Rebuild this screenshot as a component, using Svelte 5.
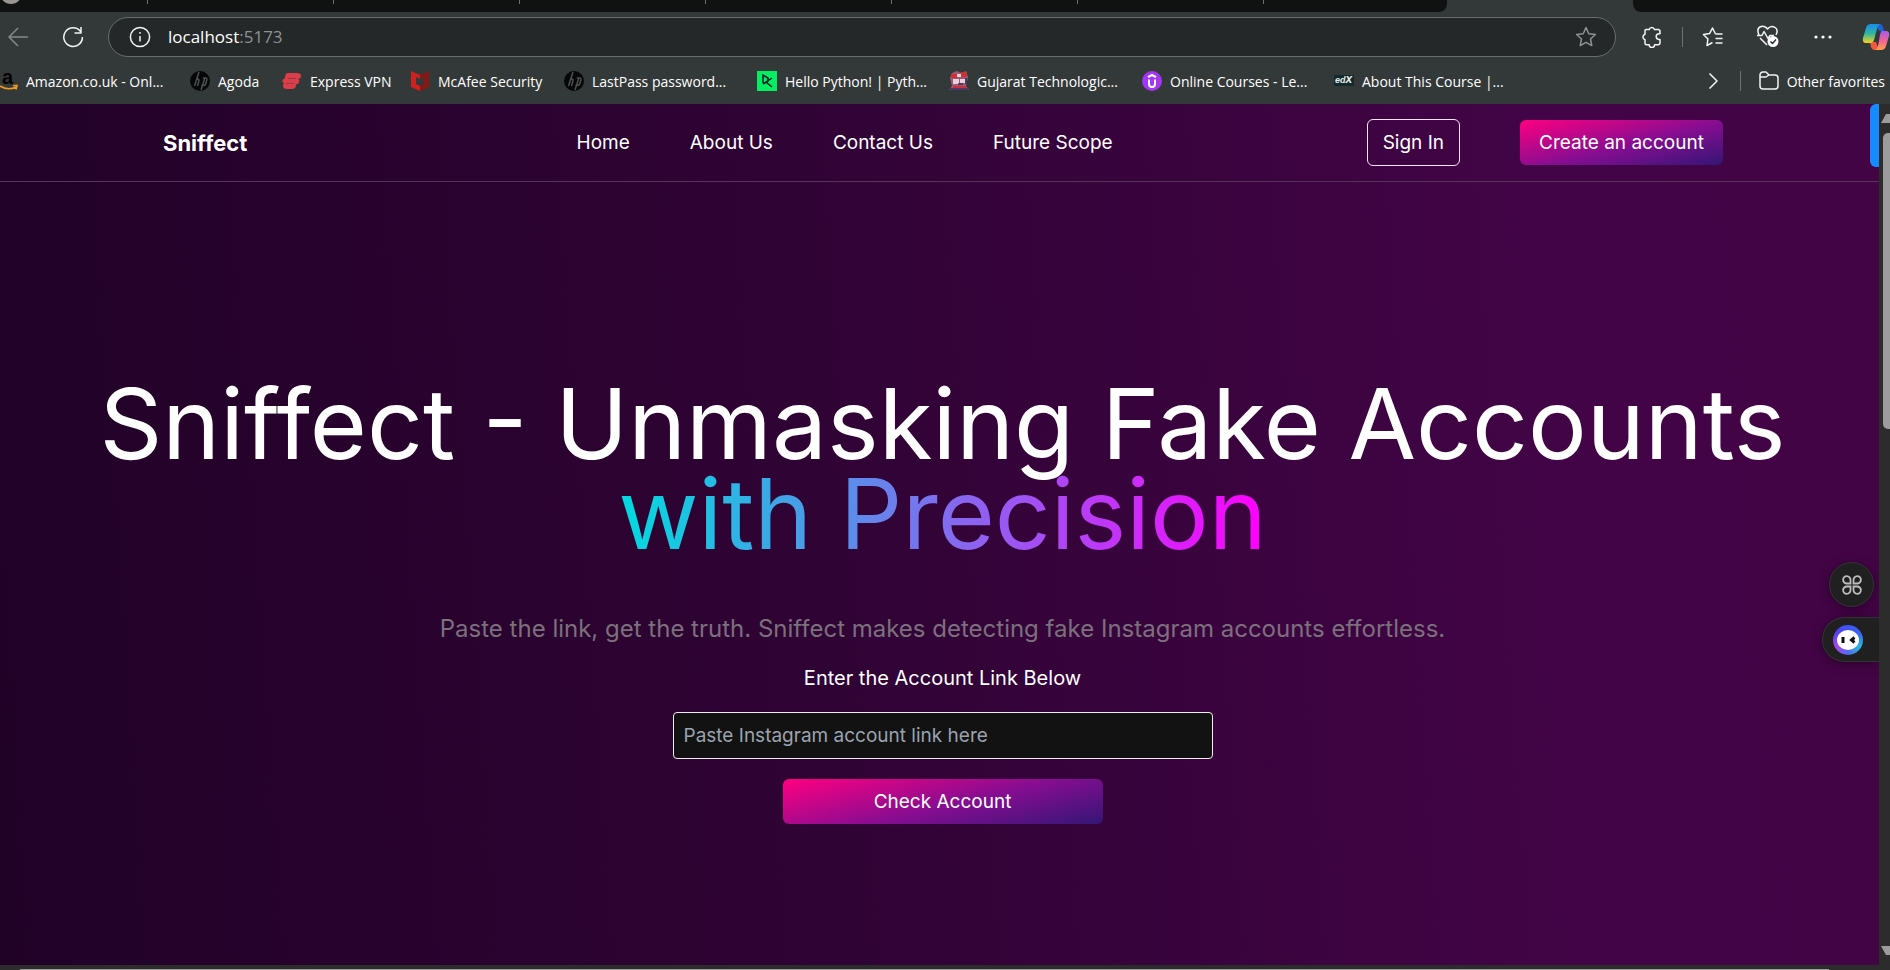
<script>
  const bookmarks = [
    ['amazon', 'Amazon.co.uk - Onl...'],
    ['hp', 'Agoda'],
    ['vpn', 'Express VPN'],
    ['mcafee', 'McAfee Security'],
    ['hp', 'LastPass password...'],
    ['dc', 'Hello Python! | Pyth...'],
    ['gtu', 'Gujarat Technologic...'],
    ['udemy', 'Online Courses - Le...'],
    ['edx', 'About This Course |...']
  ];
  const links = ['Home', 'About Us', 'Contact Us', 'Future Scope'];
  let account = $state('');
</script>

<div class="browser">
  <div class="tabs" aria-hidden="true">
    <div class="tabgroup">
      <i class="avatar"></i>
      {#each Array(7) as _}<i class="sep"></i>{/each}
    </div>
    <div class="active"></div>
    <div class="rest"></div>
  </div>

  <div class="toolbar">
    <button class="icon back" aria-label="Back">
      <svg width="22" height="22" viewBox="0 0 22 22"><path d="M21 11H2M11 2L2 11l9 9" /></svg>
    </button>
    <button class="icon reload" aria-label="Reload">
      <svg width="22" height="22" viewBox="0 0 22 22"><path d="M18.6 5.6A9.3 9.3 0 1 0 20.4 11M19 1v6h-6.5" /></svg>
    </button>
    <div class="address">
      <svg width="22" height="22" viewBox="0 0 22 22"><circle cx="11" cy="11" r="9.6" /><path d="M11 10v5.5M11 6v1.8" /></svg>
      <span class="url">localhost<em>:5173</em></span>
      <button class="icon star" aria-label="Favorite">
        <svg width="22" height="22" viewBox="0 0 22 22"><path d="M11 1.6l2.8 6.1 6.6.8-4.9 4.5 1.3 6.6-5.8-3.3-5.8 3.3L6.500 13 1.600 8.500l6.600-.8z" /></svg>
      </button>
    </div>
    <div class="tools">
      <button class="icon" aria-label="Extensions">
        <svg width="22" height="22" viewBox="0 0 22 22"><path d="M5 3.500h3.200a2.700 2.700 0 0 1 5.200 0H17a2 2 0 0 1 2 2v2.300h-1a2.800 2.800 0 0 0 0 5.600h1v3.400a2 2 0 0 1-2 2h-3.400a2.700 2.700 0 0 1-5.400 0H5.500a1.500 1.500 0 0 1-1.500-1.500v-3.600a2.800 2.800 0 0 1 0-5.400V4.500a1 1 0 0 1 1-1z" /></svg>
      </button>
      <i class="bar"></i>
      <button class="icon" aria-label="Favorites">
        <svg width="22" height="22" viewBox="0 0 22 22"><path d="M13.500 8L10.500 2 7.500 7.600 1.500 8.500l4.400 4.500L5 19.500l5.500-3M13.500 8H20.500M13.500 12.500H20.500M13.500 17H20.500" /></svg>
      </button>
      <button class="icon wide" aria-label="Browser essentials">
        <svg width="24" height="24" viewBox="0 0 24 24"><path d="M3 10C-1 1 8-1 11.500 4 15-1 24 2 20 10M1 10.500h5l2-4 4 7 2-3h4M4 13l7 7" /><circle cx="17" cy="16.500" r="5.500" fill="#fff" stroke="none" /><path d="M14.500 16.500l2 2 3.500-4" style="stroke:#333" /></svg>
      </button>
      <button class="icon wide" aria-label="More">
        <svg width="22" height="22" viewBox="0 0 22 22"><g fill="#fff" stroke="none"><circle cx="4" cy="11" r="1.600" /><circle cx="11" cy="11" r="1.600" /><circle cx="18" cy="11" r="1.600" /></g></svg>
      </button>
      <button class="icon copilot" aria-label="Copilot">
        <svg width="28" height="28" viewBox="0 0 28 28">
          <defs>
            <linearGradient id="cpa" x1="0" y1="0" x2="0" y2="1"><stop offset="0" stop-color="#1a8cf0" /><stop offset=".5" stop-color="#2fb5a0" /><stop offset="1" stop-color="#f4d321" /></linearGradient>
            <linearGradient id="cpb" x1="0" y1="0" x2="0" y2="1"><stop offset="0" stop-color="#a45cf0" /><stop offset=".5" stop-color="#f0609a" /><stop offset="1" stop-color="#ffa04a" /></linearGradient>
          </defs>
          <g stroke="none">
            <path fill="#1d63d8" d="M14 1h4q2 0 3 3l1 4h-5z" />
            <path fill="#f05a3c" d="M8 19h6l3 8h-4q-3 0-4-3z" />
            <path fill="url(#cpa)" d="M9 1h9q-2 1-3 5l-3 11q-1 3-4 3H4q-4 0-3-5L4 5q1-4 5-4z" />
            <path fill="url(#cpb)" d="M20 8h4q4 0 3 5l-3 10q-1 4-5 4h-6q2-1 3-4l2-11q1-4 2-4z" />
          </g>
        </svg>
      </button>
    </div>
  </div>

  <div class="bookmarks">
    {#each bookmarks as [kind, label]}
      <a href="#top" class="bm">
        <svg width="20" height="20" viewBox="0 0 20 20">
          {#if kind === 'amazon'}
            <text x="2" y="13" font-size="20" font-weight="700" fill="#050505">a</text>
            <path d="M0 15q8 5 16 1M13 14.500l4 0-1 4" fill="none" stroke="#f29a1f" stroke-width="1.600" />
          {:else if kind === 'hp'}
            <circle cx="10" cy="10" r="10" fill="#060707" />
            <path d="M9 1L4.500 15M5.800 9.500q4-3 3 1L7.500 15M15 6.500L11 19M12.800 7h3q1.500 0 1 2l-1 3.500q-.6 2-2 2h-2.500" fill="none" stroke="#4c5252" stroke-width="1.500" />
          {:else if kind === 'vpn'}
            <path d="M6 2h9q4 0 4 3 0 2.500-3 3 2 1 1 3.500-1 2-3 2 0 4.500-4 4.500H5q-4 0-4-3.500 0-1.500 1-2.500Q-1 11 1 8.500q1-1.500 2-1.500Q3 2 6 2z" fill="#dc3d48" />
            <path d="M6 7.500h8M4 12.500h8" stroke="#8c3c44" stroke-width="1" />
          {:else if kind === 'mcafee'}
            <path d="M1 0l9 4v4L6 6v7l4 2v5l-9-4z" fill="#d0201f" /><path d="M19 0l-9 4v4l4-2v7l-4 2v5l9-4z" fill="#851714" />
          {:else if kind === 'dc'}
            <path d="M0 0h20v20H0z" fill="#03ef62" /><path d="M6 12V4l5 3v3l-5 3M15 7l-6 4 6 5" fill="none" stroke="#05192d" stroke-width="1.500" />
          {:else if kind === 'gtu'}
            <path d="M3 2l5-2 4 2 5-2 2 6-2 9 3 4H0l3-4L1 7z" fill="#9b5a75" /><path d="M2 3h6v4H2zM12 1h6v5h-6zM4 15h13v2H4z" fill="#cf3038" /><path d="M4 8h6v5H4zM11 8h5v4h-5zM8 3h4v3H8z" fill="#e7d2dc" /><path d="M1 18h18M17 7v6M9 13h5" stroke="#342f64" stroke-width="1.500" />
          {:else if kind === 'udemy'}
            <circle cx="10" cy="10" r="10" fill="#a435f0" /><path d="M6 6.200L10 4l4 2.200M7 8.500v4.500q0 3 3 3t3-3V8.500" fill="none" stroke="#fff" stroke-width="2" />
          {:else}
            <path d="M0 4h20v11H0z" fill="#14292d" /><text x="1" y="12" font-size="9" font-style="italic" font-weight="700" fill="#e8eded">ed<tspan font-size="12">x</tspan></text>
          {/if}
        </svg>
        <span>{label}</span>
      </a>
    {/each}
    <div class="others">
      <button class="icon" aria-label="More favorites"><svg width="10" height="18" viewBox="0 0 10 18"><path d="M1.500 1.500L9 9l-7.500 7.500" /></svg></button>
      <i class="bar"></i>
      <a href="#top" class="folder">
        <svg width="20" height="20" viewBox="0 0 20 20"><path d="M1 4a3 3 0 0 1 3-3h3l3 3h6a3 3 0 0 1 3 3v8a3 3 0 0 1-3 3H4a3 3 0 0 1-3-3zM1 6h6l3-2" /></svg>
        <span>Other favorites</span>
      </a>
    </div>
  </div>

  <div class="view">
    <div class="page" id="top">
      <header>
        <a class="brand" href="#top">Sniffect</a>
        <nav>{#each links as l}<a href="#top">{l}</a>{/each}</nav>
        <div class="actions">
          <a class="signin" href="#top">Sign In</a>
          <a class="create" href="#top">Create an account</a>
        </div>
      </header>
      <main>
        <h1>Sniffect - Unmasking Fake Accounts <span>with Precision</span></h1>
        <p class="sub">Paste the link, get the truth. Sniffect makes detecting fake Instagram accounts effortless.</p>
        <label for="account">Enter the Account Link Below</label>
        <input id="account" type="text" placeholder="Paste Instagram account link here" bind:value={account} />
        <button class="check">Check Account</button>
      </main>
      <i class="bluetab"></i>
      <div class="widgets">
        <button class="apps" aria-label="Widgets">
          <svg width="20" height="20" viewBox="0 0 20 20"><path d="M8.500 8.500H5A3.700 3.700 0 1 1 8.500 5zM11.500 8.500H15A3.700 3.700 0 1 0 11.500 5zM8.500 11.500H5A3.700 3.700 0 1 0 8.500 15zM11.500 11.500H15A3.700 3.700 0 1 1 11.500 15z" /></svg>
        </button>
        <button class="bot" aria-label="Assistant">
          <i><svg width="22" height="20" viewBox="0 0 22 20"><ellipse cx="11" cy="10" rx="11" ry="10" fill="#fff" /><path d="M6 7v6M17.500 7.500L14.500 10l3 2.500" fill="none" stroke="#111" stroke-width="3" /></svg></i>
        </button>
      </div>
    </div>
    <div class="vscroll" aria-hidden="true">
      <svg width="9" height="10" viewBox="0 0 9 10"><path d="M0 9L5 0h4v9z" /></svg>
      <i></i>
      <svg class="down" width="9" height="10" viewBox="0 0 9 10"><path d="M0 0h9v9H5z" /></svg>
    </div>
  </div>
  <div class="hscroll" aria-hidden="true"><i></i></div>
</div>

<style>
  :global(body) { margin: 0; background: #333938; }
  .browser { display: flex; flex-direction: column; height: 100vh; overflow: hidden; background: #333938; font-family: "Open Sans", "Noto Sans", sans-serif; color: #fff; }
  .browser * { box-sizing: border-box; }
  a { color: inherit; text-decoration: none; }
  button { font: inherit; color: inherit; border: 0; padding: 0; background: none; cursor: pointer; }
  svg { display: block; flex: none; }

  .tabs { display: flex; height: 12px; flex: none; }
  .tabgroup { display: flex; flex: 1; background: #0f1211; border-bottom-right-radius: 8px; overflow: hidden; position: relative; padding-left: 147px; gap: 185px; }
  .avatar { position: absolute; left: 0; top: -18px; width: 22px; height: 22px; border-radius: 50%; background: #999391; }
  .sep { width: 1px; height: 4px; background: #6c6e6d; flex: none; }
  .active { width: 186px; }
  .rest { width: 257px; background: #0f1211; border-bottom-left-radius: 8px; }

  .icon svg, .address > svg, .folder svg { fill: none; stroke: #f2f4f4; stroke-width: 1.5; stroke-linejoin: round; }
  .toolbar { display: flex; align-items: center; flex: none; height: 50px; padding-left: 7px; }
  .back { margin-right: 33px; }
  .back svg { stroke: #858988; }
  .address { flex: 1; display: flex; align-items: center; height: 40px; margin-left: 24px; padding: 0 18px 0 20px; border: 1px solid #686c6b; border-radius: 20px; background: #242828; }
  .url { flex: 1; margin-left: 17px; padding-bottom: 2px; font-size: 17px; }
  .url em { font-style: normal; color: #8e9291; }
  .star svg { stroke: #8e9291; }
  .tools { display: flex; align-items: center; gap: 19px; padding-left: 25px; }
  .wide { margin-left: 13px; }
  .copilot { margin-left: 9px; }
  .bar { width: 1px; height: 20px; background: #6c706f; }

  .bookmarks { display: grid; grid-template-columns: 190px 92px 128px 154px 193px 192px 193px 192px 160px 1fr; align-items: center; flex: none; height: 42px; padding-bottom: 4px; font-size: 14px; white-space: nowrap; }
  .bm { display: flex; align-items: center; gap: 8px; }
  .bm:first-child { gap: 6px; }
  .bm svg { font-family: "Liberation Sans", sans-serif; }
  .others { display: flex; align-items: center; justify-content: flex-end; padding-right: 5px; }
  .others .bar { margin: 0 18px 0 22px; }
  .folder { display: flex; align-items: center; gap: 8px; }

  .view { flex: 1; display: flex; min-height: 0; }
  .page { flex: 1; display: flex; flex-direction: column; position: relative; min-width: 0; overflow: hidden; background: linear-gradient(86deg, #210227, #2f0334 42%, #420446 82%, #430446); font-family: Inter, "Open Sans", sans-serif; font-size: 19px; }
  header { display: grid; grid-template-columns: 414fr 791fr auto; align-items: center; height: 78px; flex: none; padding: 0 156px 0 163px; border-bottom: 1px solid #553457; }
  .brand { font-size: 22px; font-weight: 700; }
  nav { display: flex; gap: 60px; }
  .actions { display: flex; align-items: center; gap: 60px; }
  .signin { padding: 0 15px; line-height: 45px; border: 1px solid #f3e9f4; border-radius: 6px; }
  .create, .check { background: linear-gradient(166deg, #ff0080, #850d91 55%, #341675); border-radius: 6px; text-align: center; line-height: 45px; }
  .create { min-width: 203px; padding: 0 15px; }
  main { flex: 1; display: flex; flex-direction: column; align-items: center; justify-content: center; padding: 55px 80px 0 86px; text-align: center; }
  h1 { margin: 0; font-size: 98px; line-height: 90px; font-weight: 400; }
  h1 span { display: table; margin: 0 auto; background: linear-gradient(90deg, #00dbde, #ff00ff); background-clip: text; color: transparent; }
  .sub { margin: 54px 0 0; font-size: 24px; line-height: 32px; color: #7b707c; }
  label { margin-top: 19px; font-size: 20px; line-height: 28px; }
  input { margin-top: 20px; width: 540px; height: 47px; padding: 0 10px; border: 1px solid #f0ecf1; border-radius: 4px; background: #121212; color: #fff; font: inherit; }
  input::placeholder { color: #9ca3af; opacity: 1; }
  .check { margin-top: 20px; width: 320px; height: 45px; }

  .bluetab { position: absolute; right: 0; top: 0; width: 9px; height: 63px; border-radius: 6px 0 0 6px; background: #168bff; }
  .widgets { position: absolute; right: 0; top: 458px; display: flex; flex-direction: column; align-items: flex-end; gap: 10px; }
  .widgets button { display: flex; align-items: center; background: #202020; border: 1px solid #333; box-shadow: 0 2px 12px #0006; height: 45px; }
  .apps { width: 45px; justify-content: center; border-radius: 50%; margin-right: 5px; }
  .apps svg { fill: none; stroke: #bdbdbd; stroke-width: 1.8; }
  .widgets .bot { width: 57px; padding-left: 10px; border-radius: 23px 0 0 23px; border-right: 0; }
  .bot i { display: flex; align-items: center; justify-content: center; width: 30px; height: 30px; border-radius: 50%; background: conic-gradient(#3e55f5, #3a63ee, #27b9dc, #526bf0, #a347e8, #5840ee, #3e55f5); }

  .vscroll { display: flex; flex-direction: column; align-items: flex-end; width: 11px; padding: 10px 0 9px; background: #2c2c2c; }
  .vscroll svg { fill: #9c9c9c; width: 9px; }
  .vscroll i { width: 7px; height: 296px; margin-top: 9px; background: #9c9c9c; border-radius: 5px 0 0 5px; }
  .vscroll .down { margin-top: auto; }
  .hscroll { flex: none; height: 5px; padding: 4px 61px 0 20px; background: #2c2c2c; }
  .hscroll i { display: block; height: 1px; background: #9c9c9c; }
</style>
